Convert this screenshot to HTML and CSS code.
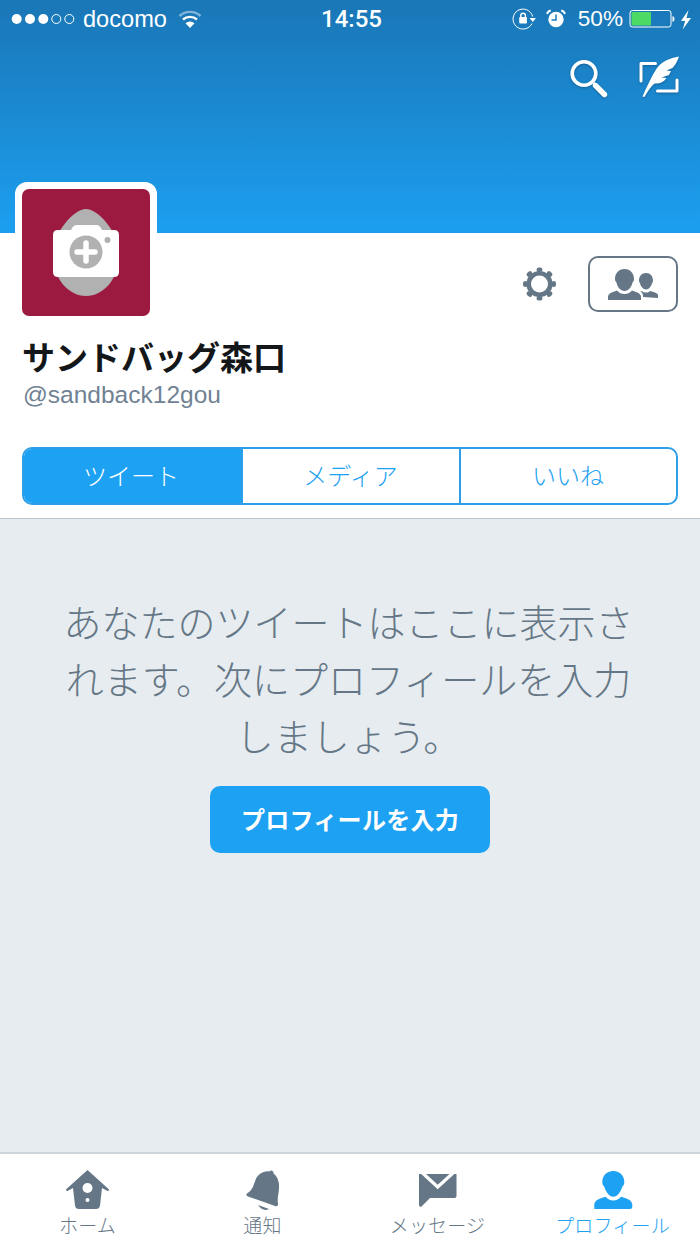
FILE: index.html
```html
<!DOCTYPE html>
<html lang="ja">
<head>
<meta charset="utf-8">
<title>サンドバッグ森口</title>
<link rel="stylesheet" href="styles.css">
</head>
<body>
<div class="app">
  <header class="hero">
    <div class="status">
      <div class="status-left">
        <svg class="i-signal" viewBox="10 10 68 18"><circle cx="16.7" cy="19" r="5" fill="#fff"/><circle cx="30" cy="19" r="5" fill="#fff"/><circle cx="43.3" cy="19" r="5" fill="#fff"/><circle cx="56.3" cy="19" r="4.5" fill="none" stroke="#fff" stroke-width="1"/><circle cx="69.3" cy="19" r="4.5" fill="none" stroke="#fff" stroke-width="1"/></svg>
        <span class="carrier">docomo</span>
        <svg class="i-wifi" viewBox="176 8 26 20"><path d="M189 27l-4.500-4.800a7 7 0 0 1 9 0z" fill="#fff"/><path d="M182 18.500a10.500 10.500 0 0 1 14 0" fill="none" stroke="#fff" stroke-width="2.400"/><path d="M178.500 15a15.500 15.500 0 0 1 21 0" fill="none" stroke="#fff" stroke-opacity=".45" stroke-width="2.400"/></svg>
      </div>
      <div class="clock">14:55</div>
      <div class="status-right">
        <svg class="i-lock" viewBox="512 7 26 24"><path d="M533 23.500a10 10 0 1 1 .7-7" fill="none" stroke="#fff" stroke-width="1"/><path d="M530.500 18h6.500l-3.200 4z" fill="#fff"/><rect x="520.200" y="17" width="7.800" height="6.400" rx="1" fill="#fff"/><path d="M521.800 17.500v-2a2.300 2.300 0 0 1 4.600 0v2" fill="none" stroke="#fff" stroke-width="1.400"/></svg>
        <svg class="i-alarm" viewBox="546 8 22 22"><circle cx="557" cy="19.500" r="7.700" fill="#fff"/><path d="M557 14.500v5.500h-4.500" fill="none" stroke="#1a7cbf" stroke-width="1.500"/><path d="M548 14q1-3 3.800-3.500M566 14q-1-3-3.800-3.500" fill="none" stroke="#fff" stroke-width="1.800"/></svg>
        <span class="percent">50%</span>
        <svg class="i-battery" viewBox="629 9 47 20"><rect x="630" y="10.500" width="41" height="16.500" rx="2.500" fill="none" stroke="#fff" stroke-width="1"/><rect x="631.500" y="12" width="19.500" height="13.500" rx="1" fill="#4cd964"/><path d="M672.500 16v6q2-.5 2-3t-2-3z" fill="#fff"/></svg>
        <svg class="i-bolt" viewBox="680 8 12 21"><path d="M688.500 9l-7.500 11h4.200l-2.500 8.500 8.300-11.500h-4.500z" fill="#fff"/></svg>
      </div>
    </div>
    <div class="hero-actions">
      <svg class="i-search" viewBox="568 57 42 42"><circle cx="584" cy="73.500" r="11.800" fill="none" stroke="#fff" stroke-width="3.600"/><path d="M593.500 83l1.500 1.500" stroke="#fff" stroke-width="3"/><path d="M595.500 85.500l9 9" stroke="#fff" stroke-width="5.400" stroke-linecap="round"/></svg>
      <svg class="i-compose" viewBox="638 55 42 43"><path d="M641 81V63.500h14.500M657.500 91H677V80" fill="none" stroke="#fff" stroke-width="3" stroke-linecap="round" stroke-linejoin="round"/><path d="M679 56.500c-9 1.500-18 5-23 13-5 8-9.500 18-13.500 27l2 .5c3-5.500 6-10 10-13.500 5 .5 9-1 12-5.500l-5-.5 7.500-2.500 2-4-4.500-.5 6-2.500c3-3 5-7 6.500-11.500z" fill="#fff"/></svg>
    </div>
  </header>

  <section class="profile">
    <div class="profile-top">
      <div class="avatar">
        <svg class="avatar-art" viewBox="22 189 128 127"><path d="M86 209C98 209 119 232 119 255 119 278 104 296 86 296 68 296 53 278 53 255 53 232 74 209 86 209z" fill="#b1b1b1"/><path d="M58 230h13q2-5 6-5h19q4 0 6 5h12q5 0 5 5v37q0 5-5 5H58q-5 0-5-5v-37q0-5 5-5z" fill="#fff"/><circle cx="86" cy="252" r="16.500" fill="#b1b1b1"/><path d="M86 243v18M77 252h18" stroke="#fff" stroke-width="5.500" stroke-linecap="round"/><circle cx="107.500" cy="240" r="3" fill="#b1b1b1"/></svg>
      </div>
      <div class="profile-actions">
        <svg class="i-gear" viewBox="520 264 40 40"><circle cx="539.500" cy="284" r="10.800" fill="none" stroke="#657786" stroke-width="4.600"/><circle cx="539.500" cy="284" r="14.300" fill="none" stroke="#657786" stroke-width="4.400" stroke-linecap="round" pathLength="8" stroke-dasharray="0.150 0.850" stroke-dashoffset="0.075"/></svg>
        <div class="follow-btn">
          <svg class="i-people" viewBox="605 266 54 35"><path d="M623.500 268c6 0 9.500 4.500 9.500 10 0 1.500-.5 2.500-1.500 3.500-1 4.500-4 8.500-8 8.500s-7-4-8-8.500c-1-1-1.500-2-1.500-3.500 0-5.500 3.500-10 9.500-10z" fill="#657786"/><path d="M607 299v-3c0-2.500 2-4 5-5l4-1.500c2 2.500 4.500 3.500 7.500 3.500s5.500-1 7.500-3.500l4 1.500c3 1 5 2.500 5 5v3z" fill="#657786"/><path d="M645 272c4.500 0 7 3.500 7 7.500 0 1-.3 2-1 2.800-.7 3-3 6.200-6 6.200s-5.300-3.200-6-6.200c-.7-.8-1-1.800-1-2.800 0-4 2.500-7.500 7-7.500z" fill="#657786"/><path d="M642 296v-1.500c0-1.500-1-3-2.500-4l1-.5c1.500 1 3 1.500 4.500 1.500s3-.5 4-1.500l3.500 1c3 .8 4.500 1.800 4.500 3.500v2.500z" fill="#657786"/></svg>
        </div>
      </div>
    </div>
    <h1 class="name">サンドバッグ森口</h1>
    <p class="handle">@sandback12gou</p>
    <nav class="segments">
      <span class="seg seg-on">ツイート</span>
      <span class="seg">メディア</span>
      <span class="seg">いいね</span>
    </nav>
  </section>

  <main class="empty">
    <p class="empty-text">あなたのツイートはここに表示さ<br>れます。次にプロフィールを入力<br>しましょう。</p>
    <button class="cta">プロフィールを入力</button>
  </main>

  <footer class="tabbar">
    <div class="tab">
      <svg class="tab-icon" viewBox="66 1168 44 44"><path fill-rule="evenodd" d="M87.500 1170l21.300 19.300q.8 1.700-1.300 1.700l-5.500-3-2 17.500q-.5 3.500-4 3.500H79q-3.500 0-4-3.500l-2-17.500-5.500 3q-2.100 0-1.300-1.700zM87.500 1183a5 5 0 1 0 0 10 5 5 0 0 0 0-10zM87.500 1198a2 2 0 1 0 0 4 2 2 0 0 0 0-4z" fill="#657786"/></svg>
      <span class="tab-label">ホーム</span>
    </div>
    <div class="tab">
      <svg class="tab-icon" viewBox="240 1168 44 44"><path d="M270 1170.500a2.500 2.500 0 0 1 2.500 3c4 3 6 8 5.500 14.500-.3 6-2 11-1 15.500q.3 3.500-3 2.500l-27-9.500q-3-1.500-.5-3.500c5-2.500 6-8 8-13 2-5.500 8-9.500 14-8.500q.5-1 1.500-1z" fill="#657786"/><path d="M257 1205l11 4q-6 3-11-4z" fill="#657786"/></svg>
      <span class="tab-label">通知</span>
    </div>
    <div class="tab">
      <svg class="tab-icon" viewBox="417 1168 44 44"><path d="M420 1174h37.500v22q0 2-2 2H431l-8.500 8.500q-2.500 1-2.500-1.500z" fill="#657786"/><path d="M423 1172.500l15.700 14.500 15.800-14.500" fill="none" stroke="#fff" stroke-width="3.200"/></svg>
      <span class="tab-label">メッセージ</span>
    </div>
    <div class="tab tab-on">
      <svg class="tab-icon" viewBox="591 1168 44 44"><path d="M613.300 1171c7 0 11 5 11 11 0 2-.7 3.500-2 4.800-1.500 5-5 10-9 10s-7.500-5-9-10c-1.300-1.300-2-2.800-2-4.800 0-6 4-11 11-11z" fill="#1da1f2"/><path d="M594.300 1209v-4c0-3.500 3-5.500 6-6.500l5-1.800c2.300 2.300 5 3.800 8 3.800s5.700-1.500 8-3.800l5 1.800c3 1 6 3 6 6.500v1.500q0 2.500-2.500 2.500z" fill="#1da1f2"/></svg>
      <span class="tab-label">プロフィール</span>
    </div>
  </footer>
</div>
</body>
</html>
```
FILE: styles.css
```css
* { box-sizing: border-box; }
html, body { margin: 0; padding: 0; }
body {
  width: 700px;
  height: 1245px;
  overflow: hidden;
  background: #fff;
  font-family: "Liberation Sans", "Noto Sans CJK JP", sans-serif;
}
svg { display: block; flex: none; }
.app { display: flex; flex-direction: column; height: 1245px; }

.hero {
  height: 233px;
  flex: none;
  background: linear-gradient(#1a76b6, #1c9ff0);
  color: #fff;
}
.status {
  display: grid;
  grid-template-columns: 1fr auto 1fr;
  align-items: center;
  height: 38px;
  padding: 0 8px 0 10px;
}
.status-left, .status-right { display: flex; align-items: center; }
.status-right { justify-content: flex-end; }
.i-signal { width: 68px; height: 18px; }
.carrier { font-size: 23.6px; margin-left: 5px; }
.i-wifi { width: 26px; height: 20px; margin-left: 10px; }
.clock { font-family: Roboto, "Liberation Sans", sans-serif; font-weight: 500; font-size: 24px; margin-left: 1px; }
.i-lock { width: 26px; height: 24px; }
.i-alarm { width: 22px; height: 22px; margin-left: 8px; }
.percent { font-size: 22.6px; margin-left: 11px; }
.i-battery { width: 47px; height: 20px; margin-left: 6px; }
.i-bolt { width: 12px; height: 21px; margin-left: 4px; }

.hero-actions {
  display: flex;
  justify-content: flex-end;
  gap: 28px;
  padding: 17px 20px 0 0;
}
.i-search { width: 42px; height: 42px; margin-top: 2px; filter: drop-shadow(0 1px 1px rgba(0,0,0,.25)); }
.i-compose { width: 42px; height: 43px; filter: drop-shadow(0 1px 1px rgba(0,0,0,.25)); }

.profile { flex: none; padding: 0 22px 13px; border-bottom: 1px solid #b9c4cc; }
.profile-top { display: flex; justify-content: space-between; margin: -51px 0 0 -7px; }
.avatar {
  position: relative;
  width: 142px;
  height: 141px;
  border: 7px solid #fff;
  border-radius: 12px;
  background: #fff;
}
.avatar-art { width: 128px; height: 127px; background: #9c1a3f; border-radius: 7px; }
.profile-actions { display: flex; align-items: center; margin-top: 74px; height: 56px; gap: 28px; }
.i-gear { width: 40px; height: 40px; }
.follow-btn {
  display: flex;
  align-items: center;
  justify-content: center;
  width: 90px;
  height: 56px;
  border: 2px solid #657786;
  border-radius: 10px;
  padding-top: 1px;
}
.i-people { width: 54px; height: 35px; }

.name {
  margin: 16px 0 0 0;
  font-size: 33px;
  line-height: 40px;
  font-weight: 700;
  color: #14171a;
}
.handle { margin: 1px 0 0 1px; font-size: 24.5px; line-height: 30px; color: #708293; }

.segments {
  display: grid;
  grid-template-columns: 217px 218px 1fr;
  height: 58px;
  margin-top: 37px;
  border: 2px solid #2e9fe6;
  border-radius: 10px;
  overflow: hidden;
}
.seg {
  display: flex;
  align-items: center;
  justify-content: center;
  padding: 0 1px 4px 0;
  font-size: 24px;
  font-weight: 300;
  color: #1da1f2;
  border-left: 2px solid #2e9fe6;
}
.seg-on { background: #1da1f2; color: #fff; border-left: 0; padding-right: 3px; }

.empty {
  flex: 1;
  display: flex;
  flex-direction: column;
  align-items: center;
  padding-top: 77px;
  background: #e6ecf0;
}
.empty-text {
  margin: 0 3px 0 0;
  font-size: 38px;
  font-weight: 300;
  line-height: 57px;
  text-align: center;
  white-space: nowrap;
  color: #657786;
}
.cta {
  width: 280px;
  height: 67px;
  margin-top: 19px;
  padding: 0 0 3px;
  border: 0;
  border-radius: 10px;
  background: #1da1f2;
  color: #fff;
  font-family: inherit;
  font-size: 24px;
  font-weight: 700;
  letter-spacing: .3px;
}

.tabbar {
  display: grid;
  grid-template-columns: repeat(4, 1fr);
  flex: none;
  height: 93px;
  border-top: 2px solid #ccd3d9;
  background: #fff;
}
.tab {
  display: flex;
  flex-direction: column;
  align-items: center;
  padding-top: 14px;
  color: #657786;
}
.tab-on { color: #1da1f2; }
.tab-icon { width: 44px; height: 44px; }
.tab-label { font-size: 19px; font-weight: 300; letter-spacing: .2px; line-height: 20px; margin-top: 5px; }
```
